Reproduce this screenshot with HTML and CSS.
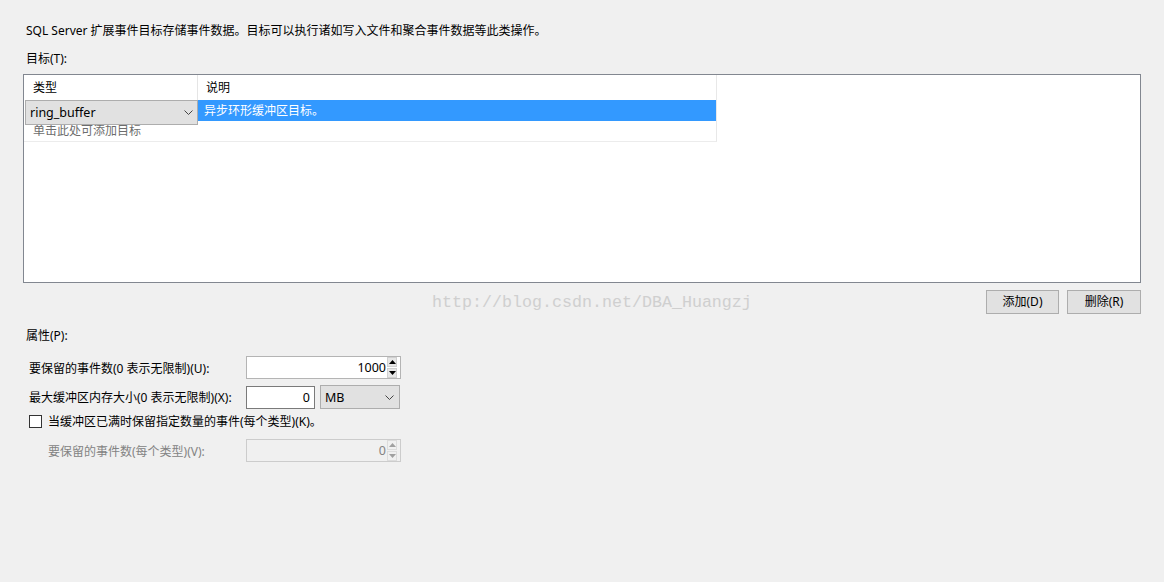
FILE: index.html
```html
<!DOCTYPE html>
<html lang="zh-CN">
<head>
<meta charset="utf-8">
<title>Targets</title>
<link rel="stylesheet" href="styles.css">
</head>
<body>
<div class="page">
  <p class="desc">SQL Server 扩展事件目标存储事件数据。目标可以执行诸如写入文件和聚合事件数据等此类操作。</p>
  <div class="label">目标(T):</div>
  <div class="targets">
    <div class="grid">
      <div class="grid-row head">
        <div class="cell c1">类型</div>
        <div class="cell c2">说明</div>
      </div>
      <div class="grid-row sel">
        <div class="cell c1">
          <div class="combo editor">
            <span>ring_buffer</span>
            <svg class="chev" width="9" height="5" viewBox="0 0 9 5"><path d="M0.5 0.5 L4.5 4.5 L8.5 0.5" fill="none" stroke="#444" stroke-width="1"/></svg>
          </div>
        </div>
        <div class="cell c2">异步环形缓冲区目标。</div>
      </div>
      <div class="grid-row add">
        <div class="cell c1 hint">单击此处可添加目标</div>
        <div class="cell c2"></div>
      </div>
    </div>
  </div>
  <div class="actions">
    <span class="watermark">http://blog.csdn.net/DBA_Huangzj</span>
    <div class="btns">
      <button class="btn">添加(D)</button>
      <button class="btn wide">删除(R)</button>
    </div>
  </div>
  <div class="label props">属性(P):</div>
  <div class="form">
    <div class="frow r1">
      <span class="flabel">要保留的事件数(0 表示无限制)(U):</span>
      <div class="spin">
        <span class="val">1000</span>
        <div class="spinbtns">
          <span class="sb"><svg width="7" height="4" viewBox="0 0 7 4"><path d="M0 4 L3.5 0 L7 4Z" fill="#000"/></svg></span>
          <span class="sb"><svg width="7" height="4" viewBox="0 0 7 4"><path d="M0 0 L3.5 4 L7 0Z" fill="#000"/></svg></span>
        </div>
      </div>
    </div>
    <div class="frow r2">
      <span class="flabel">最大缓冲区内存大小(0 表示无限制)(X):</span>
      <div class="textbox"><span class="val">0</span></div>
      <div class="combo unit">
        <span>MB</span>
        <svg class="chev" width="9" height="5" viewBox="0 0 9 5"><path d="M0.5 0.5 L4.5 4.5 L8.5 0.5" fill="none" stroke="#444" stroke-width="1"/></svg>
      </div>
    </div>
    <div class="frow r3">
      <span class="check"></span>
      <span class="ctext">当缓冲区已满时保留指定数量的事件(每个类型)(K)。</span>
    </div>
    <div class="frow r4">
      <span class="flabel sub">要保留的事件数(每个类型)(V):</span>
      <div class="spin disabled">
        <span class="val">0</span>
        <div class="spinbtns">
          <span class="sb"><svg width="7" height="4" viewBox="0 0 7 4"><path d="M0 4 L3.5 0 L7 4Z" fill="#a0a0a0"/></svg></span>
          <span class="sb"><svg width="7" height="4" viewBox="0 0 7 4"><path d="M0 0 L3.5 4 L7 0Z" fill="#a0a0a0"/></svg></span>
        </div>
      </div>
    </div>
  </div>
</div>
</body>
</html>
```
FILE: styles.css
```css
* { box-sizing: border-box; }
html, body {
  margin: 0;
  padding: 0;
  background: #f0f0f0;
}
body {
  font-family: "Noto Sans", "Noto Sans CJK SC", sans-serif;
  font-size: 12px;
  color: #000;
  width: 1164px;
  height: 582px;
  overflow: hidden;
}
.page {
  padding: 0 23px 0 23px;
}
.desc {
  margin: 23px 0 0 3px;
  line-height: 16px;
  height: 16px;
  white-space: nowrap;
}
.label {
  margin: 12px 0 0 3px;
  line-height: 16px;
  height: 16px;
}
.targets {
  margin-top: 7px;
  height: 209px;
  background: #fff;
  border: 1px solid #828790;
}
.grid {
  width: 693px;
  border-right: 1px solid #e8e8e8;
  border-bottom: 1px solid #ececec;
}
.grid-row {
  display: flex;
  position: relative;
}
.cell {
  white-space: nowrap;
}
.c1 {
  width: 174px;
  flex: none;
}
.c2 {
  flex: 1;
}
.head {
  height: 25px;
  line-height: 25px;
}
.head .c1 {
  padding-left: 9px;
  border-right: 1px solid #e5e5e5;
}
.head .c2 {
  padding-left: 8px;
}
.sel {
  height: 21px;
  line-height: 21px;
}
.sel .c1 {
  position: relative;
}
.sel .c2 {
  background: #3399ff;
  color: #fff;
  padding-left: 6px;
}
.combo {
  display: flex;
  align-items: center;
  justify-content: space-between;
  background: #e1e1e1;
  border: 1px solid #adadad;
  white-space: nowrap;
}
.editor {
  position: absolute;
  left: 1px;
  top: 0;
  width: 173px;
  height: 25px;
  padding: 0 4px 0 4px;
  font-size: 12.5px;
  z-index: 2;
}
.chev {
  display: block;
  margin-right: 0;
}
.add {
  height: 20px;
  line-height: 20px;
}
.hint {
  padding-left: 9px;
  color: #6d6d6d;
}
.actions {
  margin-top: 7px;
  height: 24px;
  display: flex;
  align-items: center;
  justify-content: space-between;
}
.watermark {
  margin-left: 409px;
  font-family: "Liberation Mono", monospace;
  font-size: 16.67px;
  color: #cfcfcf;
  line-height: 24px;
  margin-top: 2px;
}
.btns {
  display: flex;
  gap: 8px;
  margin-right: 0;
}
.btn {
  width: 73px;
  height: 24px;
  margin: 0;
  padding: 0;
  background: #e1e1e1;
  border: 1px solid #adadad;
  font-family: "Noto Sans", "Noto Sans CJK SC", sans-serif;
  font-size: 12px;
  color: #000;
  line-height: 20px;
}
.btn.wide {
  width: 74px;
}
.props {
  margin-top: 14px;
}
.form {
  display: flex;
  flex-direction: column;
}
.frow {
  display: flex;
  align-items: center;
}
.r1 { margin-top: 12px; height: 23px; }
.r2 { margin-top: 6px; height: 24px; }
.r3 { margin-top: 6px; height: 13px; }
.r4 { margin-top: 11px; height: 23px; }
.flabel {
  width: 223px;
  padding-left: 6px;
  white-space: nowrap;
  flex: none;
}
.flabel.sub {
  padding-left: 25px;
  color: #838383;
}
.spin {
  width: 155px;
  height: 23px;
  background: #fff;
  border: 1px solid #b4b4b4;
  display: flex;
  align-items: center;
  justify-content: flex-end;
  padding-right: 3px;
}
.val {
  font-size: 12.5px;
  padding-right: 1px;
}
.spinbtns {
  display: flex;
  flex-direction: column;
  gap: 1px;
  margin-left: 0;
}
.sb {
  width: 10px;
  height: 10px;
  background: #e6e6e6;
  border: 1px solid #d0d0d0;
  display: flex;
  align-items: center;
  justify-content: center;
}
.spin.disabled {
  background: #f0f0f0;
  border-color: #cccccc;
  color: #838383;
}
.spin.disabled .sb {
  background: #f0f0f0;
  border-color: #dcdcdc;
}
.textbox {
  width: 69px;
  height: 23px;
  background: #fff;
  border: 1px solid #7a7a7a;
  display: flex;
  align-items: center;
  justify-content: flex-end;
  padding-right: 3px;
}
.unit {
  margin-left: 5px;
  width: 80px;
  height: 24px;
  padding: 0 5px 0 4px;
  font-size: 12.5px;
}
.check {
  width: 13px;
  height: 13px;
  margin-left: 6px;
  border: 1px solid #333;
  background: #fff;
  flex: none;
}
.ctext {
  margin-left: 6px;
  white-space: nowrap;
  line-height: 13px;
}
```
